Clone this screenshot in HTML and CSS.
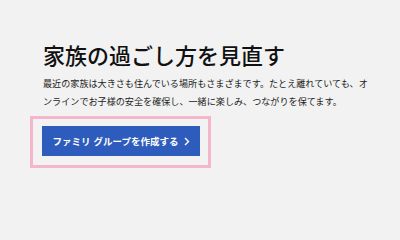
FILE: index.html
```html
<!DOCTYPE html>
<html lang="ja">
<head>
<meta charset="utf-8">
<link rel="stylesheet" href="styles.css">
</head>
<body>
<main class="hero">
  <h1 class="title">家族の過ごし方を見直す</h1>
  <p class="lead">最近の家族は大きさも住んでいる場所もさまざまです。たとえ離れていても、オンラインでお子様の安全を確保し、一緒に楽しみ、つながりを保てます。</p>
  <div class="focus">
    <a class="cta" href="#"><span class="label">ファミリ <span class="word">グループを作成する</span></span><svg class="chev" width="6" height="9" viewBox="0 0 6 9"><path d="M1 1 L4.5 4.5 L1 8" fill="none" stroke="#fff" stroke-width="1.4"/></svg></a>
  </div>
</main>
</body>
</html>
```
FILE: styles.css
```css
html, body {
  margin: 0;
  padding: 0;
  background: #f2f2f2;
}
.hero {
  padding: 40px 26px 0 43px;
  font-family: "Noto Sans CJK JP", "Noto Sans", sans-serif;
  color: #1a1a1a;
}
.title {
  margin: 0;
  font-size: 22px;
  line-height: 28px;
  font-weight: 500;
  color: #111;
}
.lead {
  margin: 6px 0 0;
  font-size: 9.1px;
  line-height: 18px;
  color: #222;
  width: 331px;
}
.focus {
  display: inline-block;
  margin: 6px 0 0 -13px;
  border: 3px solid #f5b6cb;
  padding: 7px 8px 9px 9px;
}
.cta {
  display: flex;
  align-items: center;
  justify-content: center;
  gap: 5px;
  width: 158px;
  height: 30px;
  background: #2d5cbc;
  color: #fff;
  text-decoration: none;
  font-size: 9.5px;
  font-weight: 700;
}
.label {
  white-space: nowrap;
}
.word {
  margin-left: 1px;
}
.chev {
  display: block;
}
```
